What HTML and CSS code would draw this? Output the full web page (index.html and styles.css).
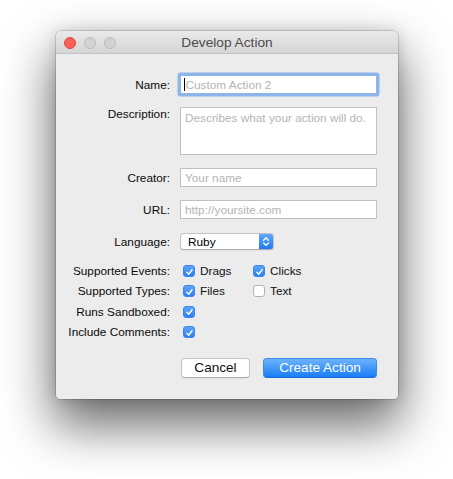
FILE: index.html
```html
<!DOCTYPE html>
<html>
<head>
<meta charset="utf-8">
<link rel="stylesheet" href="styles.css">
</head>
<body>
<div class="stage">
  <div class="window">
    <div class="titlebar">
      <div class="lights">
        <span class="light close"></span>
        <span class="light"></span>
        <span class="light"></span>
      </div>
      <div class="title">Develop Action</div>
      <div></div>
    </div>
    <div class="content">
      <div class="row row-name">
        <div class="lbl">Name:</div>
        <div class="input focus"><span class="caret"></span><span class="ph">Custom Action 2</span></div>
      </div>
      <div class="row row-desc">
        <div class="lbl lbl-top">Description:</div>
        <div class="textarea"><span class="ph">Describes what your action will do.</span></div>
      </div>
      <div class="row row-gap">
        <div class="lbl">Creator:</div>
        <div class="input"><span class="ph">Your name</span></div>
      </div>
      <div class="row row-gap">
        <div class="lbl">URL:</div>
        <div class="input"><span class="ph">http://yoursite.com</span></div>
      </div>
      <div class="row row-select">
        <div class="lbl">Language:</div>
        <div class="select">
          <span class="sel-text">Ruby</span>
          <span class="stepper">
            <svg width="14" height="17" viewBox="0 0 14 17"><path d="M4.6 7.2 L7 4.8 L9.4 7.2 M4.6 10 L7 12.4 L9.4 10" fill="none" stroke="#fff" stroke-width="1.3" stroke-linecap="round" stroke-linejoin="round"/></svg>
          </span>
        </div>
      </div>
      <div class="checks">
        <div class="row row-check">
          <div class="lbl">Supported Events:</div>
          <div class="opts">
            <div class="opt"><span class="cb on"><svg width="12" height="12" viewBox="0 0 12 12"><path d="M3.2 6.3 L5.1 8.4 L8.8 3.6" fill="none" stroke="#fff" stroke-width="1.6" stroke-linecap="round" stroke-linejoin="round"/></svg></span><span>Drags</span></div>
            <div class="opt"><span class="cb on"><svg width="12" height="12" viewBox="0 0 12 12"><path d="M3.2 6.3 L5.1 8.4 L8.8 3.6" fill="none" stroke="#fff" stroke-width="1.6" stroke-linecap="round" stroke-linejoin="round"/></svg></span><span>Clicks</span></div>
          </div>
        </div>
        <div class="row row-check">
          <div class="lbl">Supported Types:</div>
          <div class="opts">
            <div class="opt"><span class="cb on"><svg width="12" height="12" viewBox="0 0 12 12"><path d="M3.2 6.3 L5.1 8.4 L8.8 3.6" fill="none" stroke="#fff" stroke-width="1.6" stroke-linecap="round" stroke-linejoin="round"/></svg></span><span>Files</span></div>
            <div class="opt"><span class="cb off"></span><span>Text</span></div>
          </div>
        </div>
        <div class="row row-check">
          <div class="lbl">Runs Sandboxed:</div>
          <div class="opts">
            <div class="opt"><span class="cb on"><svg width="12" height="12" viewBox="0 0 12 12"><path d="M3.2 6.3 L5.1 8.4 L8.8 3.6" fill="none" stroke="#fff" stroke-width="1.6" stroke-linecap="round" stroke-linejoin="round"/></svg></span></div>
          </div>
        </div>
        <div class="row row-check">
          <div class="lbl">Include Comments:</div>
          <div class="opts">
            <div class="opt"><span class="cb on"><svg width="12" height="12" viewBox="0 0 12 12"><path d="M3.2 6.3 L5.1 8.4 L8.8 3.6" fill="none" stroke="#fff" stroke-width="1.6" stroke-linecap="round" stroke-linejoin="round"/></svg></span></div>
          </div>
        </div>
      </div>
      <div class="buttons">
        <div class="btn cancel">Cancel</div>
        <div class="btn primary">Create Action</div>
      </div>
    </div>
  </div>
</div>
</body>
</html>
```
FILE: styles.css
```css
html, body {
  margin: 0;
  padding: 0;
  background: #ffffff;
}
body {
  font-family: "Liberation Sans", Arial, sans-serif;
  font-size: 11.8px;
  color: #111;
}
.stage {
  padding: 31px 0 0 56px;
  height: 479px;
  box-sizing: border-box;
  overflow: hidden;
}
.window {
  width: 342px;
  height: 368px;
  background: #ececec;
  border-radius: 5px 5px 4px 4px;
  box-shadow: 0 0 0 0.5px rgba(0,0,0,0.28), 0 0 14px rgba(0,0,0,0.14), 0 24px 50px 3px rgba(0,0,0,0.58);
  overflow: hidden;
  box-sizing: border-box;
}
.titlebar {
  height: 23px;
  box-sizing: border-box;
  display: grid;
  grid-template-columns: 1fr auto 1fr;
  align-items: center;
  background: linear-gradient(#ebeaeb, #d6d5d6);
  border-bottom: 1px solid #c4c3c4;
}
.lights {
  display: flex;
  gap: 8px;
  padding-left: 8px;
  padding-top: 1px;
}
.light {
  width: 12px;
  height: 12px;
  border-radius: 50%;
  box-sizing: border-box;
  background: #d3d2d3;
  border: 0.5px solid #bdbcbd;
}
.light.close {
  background: #fc5f58;
  border-color: #e14841;
}
.title {
  font-size: 13.7px;
  color: #4b4b4b;
  padding-top: 1px;
}
.content {
  padding: 21px 21px 0 0;
  box-sizing: border-box;
}
.row {
  display: flex;
  align-items: center;
}
.lbl {
  width: 114px;
  margin-right: 10px;
  text-align: right;
  white-space: nowrap;
  color: #0a0a0a;
}
.row-desc {
  align-items: flex-start;
  margin-top: 13px;
}
.lbl-top {
  line-height: 14px;
}
.row-gap {
  margin-top: 13px;
}
.row-select {
  margin-top: 14px;
}
.input {
  width: 197px;
  height: 19px;
  box-sizing: border-box;
  background: #fff;
  border: 1px solid #c0c0c0;
  display: flex;
  align-items: center;
  padding-left: 4px;
  white-space: nowrap;
}
.input.focus {
  border-color: #8fb4e6;
  box-shadow: 0 0 0 2.5px rgba(124, 172, 236, 0.85);
  border-radius: 1px;
  padding-left: 3px;
}
.caret {
  width: 1px;
  height: 13px;
  background: #000;
  margin-right: 0.5px;
}
.ph {
  color: #b4b4b4;
}
.textarea {
  width: 197px;
  height: 48px;
  box-sizing: border-box;
  background: #fff;
  border: 1px solid #c0c0c0;
  padding: 3px 0 0 4px;
  white-space: nowrap;
  line-height: 14px;
}
.select {
  width: 94px;
  height: 17px;
  box-sizing: border-box;
  display: flex;
  align-items: stretch;
  background: #fff;
  border: 0.5px solid #c3c3c3;
  border-bottom-color: #acacac;
  border-radius: 3.5px;
  overflow: hidden;
  box-shadow: 0 0.5px 0.5px rgba(0,0,0,0.08);
}
.sel-text {
  flex: 1;
  padding-left: 7px;
  display: flex;
  align-items: center;
  color: #000;
}
.stepper {
  width: 14px;
  background: linear-gradient(#5fa9fb, #2079f5);
  display: flex;
  align-items: center;
  justify-content: center;
}
.checks {
  margin-top: 11px;
}
.row-check {
  height: 20.3px;
}
.opts {
  display: flex;
  padding-left: 3px;
}
.opt {
  width: 70px;
  display: flex;
  align-items: center;
  gap: 5px;
  white-space: nowrap;
}
.cb {
  width: 12px;
  height: 12px;
  box-sizing: border-box;
  border-radius: 3px;
  display: flex;
  flex-shrink: 0;
}
.cb.on {
  background: linear-gradient(#5ba5fa, #2c80f6);
  border: 0.5px solid #3a84ea;
}
.cb.on svg {
  margin: -0.5px;
}
.cb.off {
  background: #fff;
  border: 1px solid #b3b3b3;
}
.buttons {
  display: flex;
  justify-content: flex-end;
  gap: 13px;
  margin-top: 15.5px;
}
.btn {
  height: 20px;
  box-sizing: border-box;
  border-radius: 4px;
  display: flex;
  align-items: center;
  justify-content: center;
  font-size: 13.6px;
}
.btn.cancel {
  width: 69px;
  background: #fff;
  border: 0.5px solid #c6c6c6;
  border-bottom-color: #aeaeae;
  color: #111;
  box-shadow: 0 0.5px 0.5px rgba(0,0,0,0.1);
}
.btn.primary {
  width: 114px;
  background: linear-gradient(#6db3fb, #1a7df6);
  border: 0.5px solid #3b88ef;
  border-bottom-color: #1566d8;
  color: #fff;
}
```
